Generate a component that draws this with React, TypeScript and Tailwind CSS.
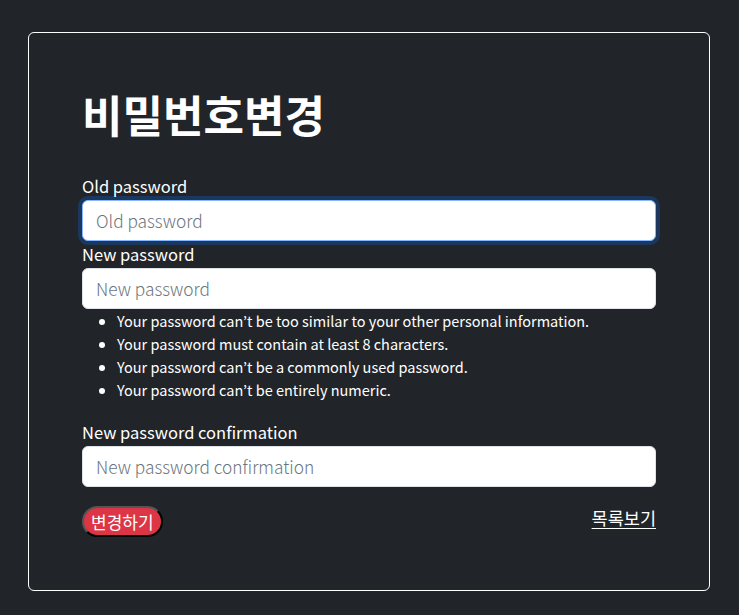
const font = "font-['Noto_Sans_CJK_KR','Noto_Sans',sans-serif]";

const rules = [
  "Your password can’t be too similar to your other personal information.",
  "Your password must contain at least 8 characters.",
  "Your password can’t be a commonly used password.",
  "Your password can’t be entirely numeric.",
];

function Field({ id, label, focused }: { id: string; label: string; focused?: boolean }) {
  return (
    <>
      <label htmlFor={id} className="block text-[16.5px] leading-[27px] text-white">
        {label}
      </label>
      <input
        id={id}
        type="password"
        placeholder={label}
        className={
          "block w-full h-[41px] rounded-[6px] bg-white px-[13px] text-[17.3px] font-light text-gray-900 placeholder:text-[#6c757d] outline-none " +
          (focused
            ? "border border-[#86b7fe] shadow-[0_0_0_4px_rgba(13,110,253,0.25)]"
            : "border border-[#dee2e6]")
        }
      />
    </>
  );
}

export default function App() {
  return (
    <div className={`min-h-[615px] bg-[#212529] pt-[32px] px-[28px] pb-[24px] ${font}`}>
      <div className="w-[682px] h-[559px] rounded-[6px] border border-white px-[53px] pt-[55px]">
        <h1 className="text-[44px] leading-[53px] font-bold text-white mb-[32px]">비밀번호변경</h1>
        <form>
          <Field id="old" label="Old password" focused />
          <Field id="new1" label="New password" />
          <ul className="list-disc pl-[35px] mb-[18px] text-[14.5px] leading-[23px] text-white">
            {rules.map((r) => (
              <li key={r}>{r}</li>
            ))}
          </ul>
          <Field id="new2" label="New password confirmation" />
          <div className="flex items-start justify-between mt-[19px]">
            <button
              type="button"
              className="h-[31px] rounded-full bg-[#dc3545] px-[7px] text-[17px] leading-[24px] text-white border-2 [border-style:outset] border-[#555]"
            >
              변경하기
            </button>
            <a href="#" className="text-[17.5px] leading-[24px] text-white underline underline-offset-[3px]">
              목록보기
            </a>
          </div>
        </form>
      </div>
    </div>
  );
}
